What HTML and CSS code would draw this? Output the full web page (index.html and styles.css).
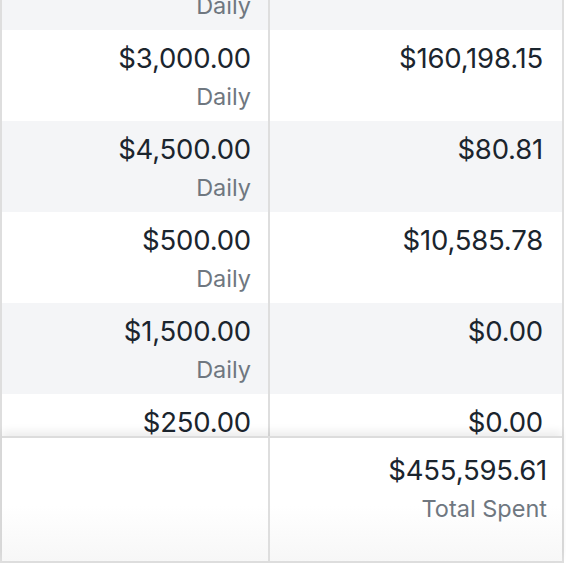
FILE: index.html
```html
<!DOCTYPE html>
<html lang="en">
<head>
  <meta charset="UTF-8">
  <meta name="viewport" content="width=device-width, initial-scale=1.0">
  <title>Budgets</title>
  <link rel="stylesheet" href="styles.css">
</head>
<body>

  <div class="table">
    <div class="rows">
      <div class="list">
        <div class="row striped">
          <div class="cell"><div class="amount">&nbsp;</div><div class="sub">Daily</div></div>
          <div class="cell"></div>
        </div>
        <div class="row">
          <div class="cell"><div class="amount">$3,000.00</div><div class="sub">Daily</div></div>
          <div class="cell"><div class="amount">$160,198.15</div></div>
        </div>
        <div class="row striped">
          <div class="cell"><div class="amount">$4,500.00</div><div class="sub">Daily</div></div>
          <div class="cell"><div class="amount">$80.81</div></div>
        </div>
        <div class="row">
          <div class="cell"><div class="amount">$500.00</div><div class="sub">Daily</div></div>
          <div class="cell"><div class="amount">$10,585.78</div></div>
        </div>
        <div class="row striped">
          <div class="cell"><div class="amount">$1,500.00</div><div class="sub">Daily</div></div>
          <div class="cell"><div class="amount">$0.00</div></div>
        </div>
        <div class="row">
          <div class="cell"><div class="amount">$250.00</div><div class="sub">Daily</div></div>
          <div class="cell"><div class="amount">$0.00</div></div>
        </div>
      </div>
    </div>

    <div class="footer">
      <div class="cell"></div>
      <div class="cell total"><div class="amount">$455,595.61</div><div class="sub">Total Spent</div></div>
    </div>
  </div>

</body>
</html>
```

FILE: styles.css
```css
body {
  margin: 0;
  background-color: white;
  font-family: Inter, 'Noto Sans', sans-serif;
  color: #1b252e;
}

.table {
  width: 564px;
  height: 563px;
  box-sizing: border-box;
  border: 2px solid #dedede;
  border-top: none;
  display: flex;
  flex-direction: column;
}

.rows {
  height: 436px;
  overflow: hidden;
}

.list {
  margin-top: -61px;
}

.row {
  display: grid;
  grid-template-columns: 268px 1fr;
  height: 91px;
  background-color: white;
}

.row.striped {
  background-color: #f4f5f7;
}

.cell {
  text-align: right;
  padding: 9px 19px 0 0;
}

.cell:first-child {
  border-right: 2px solid #dedede;
  padding-right: 17px;
}

.amount {
  font-size: 27.5px;
  line-height: 38px;
  letter-spacing: -0.2px;
}

.sub {
  font-size: 23.5px;
  line-height: 40px;
  color: #6f7780;
}

.footer {
  flex: 1;
  display: grid;
  grid-template-columns: 268px 1fr;
  border-top: 2px solid #dcdcdc;
  box-shadow: 0 -5px 8px rgba(0,0,0,0.07);
  background: linear-gradient(to bottom, white 55%, #f7f7f7);
}

.footer .cell {
  padding-top: 13px;
}

.footer .total {
  padding-right: 15px;
}
```
